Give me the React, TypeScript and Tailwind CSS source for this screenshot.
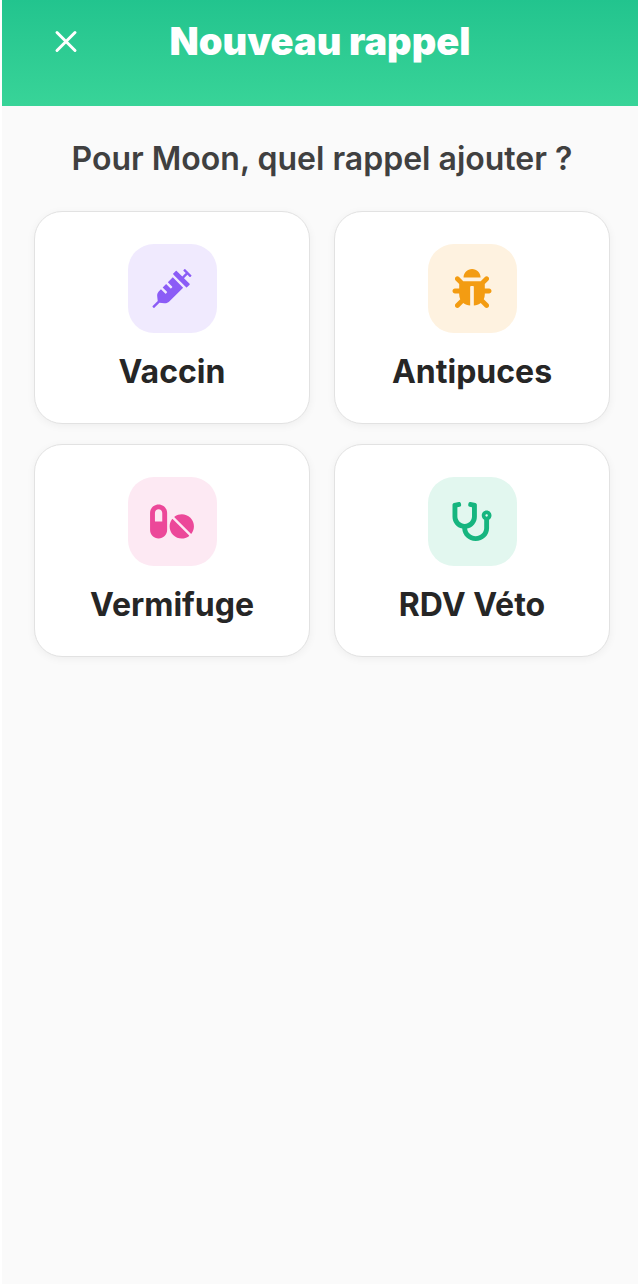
import type { IconType } from 'react-icons'
import { FaBug, FaPills, FaStethoscope, FaSyringe } from 'react-icons/fa'

type Reminder = {
  label: string
  icon: IconType
  tile: string
}

const reminders: Reminder[] = [
  { label: 'Vaccin', icon: FaSyringe, tile: 'bg-[#f0eafe] text-[#8b5cf6]' },
  { label: 'Antipuces', icon: FaBug, tile: 'bg-[#fef2e0] text-[#f39c12]' },
  { label: 'Vermifuge', icon: FaPills, tile: 'bg-[#fde9f3] text-[#ec4899]' },
  { label: 'RDV Véto', icon: FaStethoscope, tile: 'bg-[#e2f7ef] text-[#16b57f]' },
]

function ReminderCard({ label, icon: Icon, tile }: Reminder) {
  return (
    <button
      type="button"
      className="flex flex-col items-center rounded-[28px] border border-[#e2e2e2] bg-white px-4 pt-8 pb-8 shadow-[0_2px_8px_rgba(0,0,0,0.05)]"
    >
      <span className={`flex h-[89px] w-[89px] items-center justify-center rounded-[26px] ${tile}`}>
        <Icon className="h-[39px] w-11" aria-hidden="true" />
      </span>
      <span className="mt-5 text-[32px] leading-[38px] font-bold text-[#262626]">{label}</span>
    </button>
  )
}

export default function App() {
  return (
    <div className="min-h-screen border-l-2 border-white bg-[#fafafa] font-['Inter',sans-serif]">
      <header className="grid grid-cols-[64px_1fr_64px] items-center bg-linear-to-b from-[#22c48e] to-[#38d498] px-8 pt-4 pb-10">
        <button type="button" aria-label="Fermer" className="flex h-[50px] items-center justify-center text-white">
          <svg
            viewBox="0 0 24 24"
            className="h-6 w-6"
            fill="none"
            stroke="currentColor"
            strokeWidth="3"
            strokeLinecap="round"
          >
            <path d="M3 3.5l18 18M21 3.5L3 21.5" />
          </svg>
        </button>
        <h1 className="text-center text-[38px] leading-[50px] font-black whitespace-nowrap text-white">
          Nouveau rappel
        </h1>
      </header>

      <main className="pt-8 pr-7 pl-8">
        <h2 className="text-center text-[32px] leading-[41px] font-semibold text-[#404040]">
          Pour Moon, quel rappel ajouter ?
        </h2>
        <div className="mt-8 grid grid-cols-2 gap-x-6 gap-y-5">
          {reminders.map((reminder) => (
            <ReminderCard key={reminder.label} {...reminder} />
          ))}
        </div>
      </main>
    </div>
  )
}
